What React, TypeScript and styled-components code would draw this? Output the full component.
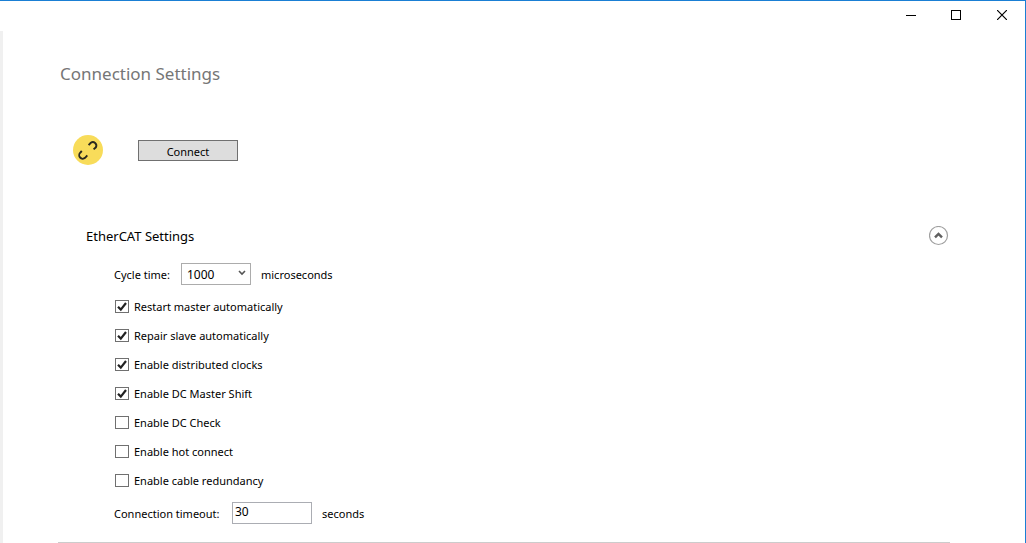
import React, { useState } from "react";
import styled, { createGlobalStyle } from "styled-components";

const GlobalStyle = createGlobalStyle`
  *, *::before, *::after { box-sizing: border-box; }
  html, body, #root { height: 100%; }
  body {
    margin: 0;
    background: #fff;
    color: #000;
    font: 11px/16px "Segoe UI", "Noto Sans", "Open Sans", sans-serif;
  }
  button, input, select { font: inherit; color: inherit; border-radius: 0; margin: 0; }
`;

const Window = styled.div`
  display: flex;
  flex-direction: column;
  min-height: 100%;
  border-top: 1px solid #1a7fd4;
  border-right: 1px solid #1a7fd4;
`;

const TitleBar = styled.header`
  display: flex;
  justify-content: flex-end;
  height: 30px;
`;

const CaptionButton = styled.button`
  display: flex;
  align-items: center;
  justify-content: center;
  width: 46px;
  height: 28px;
  padding: 0;
  border: 0;
  background: none;
`;

const Content = styled.main`
  flex: 1;
  border-left: 3px solid #f0f0f0;
  padding: 30px 75px 0 55px;
`;

const PageTitle = styled.h1`
  margin: 0;
  padding-left: 2px;
  font-size: 17px;
  line-height: 26px;
  font-weight: 400;
  color: #767676;
`;

const ConnectBar = styled.section`
  display: flex;
  align-items: center;
  gap: 35px;
  margin-top: 48px;
  padding-left: 15px;
`;

const ConnectButton = styled.button`
  width: 100px;
  height: 21px;
  padding: 3px 0 0;
  border: 1px solid #707070;
  background: #ddd;
  line-height: 16px;
`;

const Group = styled.section`
  margin-top: 60px;
  padding-bottom: 18px;
  border-bottom: 1px solid #ccc;
`;

const GroupHeader = styled.div`
  display: flex;
  align-items: center;
  justify-content: space-between;
  padding: 0 1px 0 28px;
`;

const GroupTitle = styled.h2`
  margin: 0;
  font-size: 13px;
  line-height: 22px;
  font-weight: 400;
`;

const Expander = styled.button`
  display: flex;
  padding: 0;
  border: 0;
  background: none;
`;

const GroupBody = styled.div`
  padding: 16px 0 0 56px;
`;

const FieldRow = styled.div`
  display: flex;
  align-items: center;
  gap: 10px;
  height: 22px;
`;

const FieldLabel = styled.label<{ $width: number }>`
  flex: none;
  width: ${(p) => p.$width}px;
  margin-right: -10px;
  padding-top: 1px;
  white-space: nowrap;
`;

const Unit = styled.span`
  padding-top: 1px;
`;

const SelectBox = styled.div`
  position: relative;
  display: flex;
  width: 70px;
  height: 22px;

  svg {
    position: absolute;
    right: 5px;
    top: 7px;
    pointer-events: none;
  }
`;

const Select = styled.select`
  appearance: none;
  width: 100%;
  padding: 1px 5px 0;
  border: 1px solid #acacac;
  background: #fff;
  font-size: 12px;
`;

const TextInput = styled.input`
  width: 80px;
  height: 22px;
  padding: 0 2px 3px;
  border: 1px solid #abadb3;
  background: #fff;
  font-size: 12px;
`;

const OptionList = styled.ul`
  display: grid;
  gap: 13px;
  margin: 14px 0 13px;
  padding: 0 0 0 1px;
  list-style: none;
`;

const Option = styled.label`
  display: inline-flex;
  align-items: center;
  gap: 5px;
  height: 16px;
  vertical-align: top;
`;

const OptionItem = styled.li`
  height: 16px;
`;

const CheckMark = styled.span`
  display: grid;
  width: 14px;
  height: 14px;

  > * { grid-area: 1 / 1; }
  > svg { visibility: hidden; pointer-events: none; }
  > input:checked + svg { visibility: visible; }
`;

const CheckInput = styled.input`
  appearance: none;
  width: 14px;
  height: 13px;
  border: 1px solid #707070;
  background: #fff;
`;

const initialOptions = [
  { label: "Restart master automatically", on: true },
  { label: "Repair slave automatically", on: true },
  { label: "Enable distributed clocks", on: true },
  { label: "Enable DC Master Shift", on: true },
  { label: "Enable DC Check", on: false },
  { label: "Enable hot connect", on: false },
  { label: "Enable cable redundancy", on: false },
];

const LinkIcon = () => (
  <svg width="30" height="30" viewBox="0 0 30 30" aria-hidden="true">
    <circle cx="15" cy="15" r="15" fill="#f8dc5a" />
    <g fill="none" stroke="#2b2a20" strokeWidth="1.9">
      <path d="M15.6 10.2 L17.8 7.8 A3.5 3.5 0 0 1 22.9 12.3 L20.6 14.4" />
      <path d="M8.8 16 L7.4 17.5 A3.5 3.5 0 0 0 12.1 22.8 L14.3 20.4" />
    </g>
  </svg>
);

export default function App() {
  const [options, setOptions] = useState(initialOptions);
  const [open, setOpen] = useState(true);
  const toggle = (i: number) =>
    setOptions(options.map((o, n) => (n === i ? { ...o, on: !o.on } : o)));

  return (
    <Window>
      <GlobalStyle />
      <TitleBar>
        <CaptionButton aria-label="Minimize">
          <svg width="12" height="10" shapeRendering="crispEdges">
            <path d="M2 5.5H12" stroke="#000" />
          </svg>
        </CaptionButton>
        <CaptionButton aria-label="Maximize">
          <svg width="10" height="10" shapeRendering="crispEdges">
            <rect x=".5" y=".5" width="9" height="9" fill="none" stroke="#000" />
          </svg>
        </CaptionButton>
        <CaptionButton aria-label="Close">
          <svg width="10" height="10">
            <path d="M0 0L10 10M10 0L0 10" stroke="#000" strokeWidth="1.2" />
          </svg>
        </CaptionButton>
      </TitleBar>
      <Content>
        <PageTitle>Connection Settings</PageTitle>
        <ConnectBar>
          <LinkIcon />
          <ConnectButton>Connect</ConnectButton>
        </ConnectBar>
        <Group>
          <GroupHeader>
            <GroupTitle>EtherCAT Settings</GroupTitle>
            <Expander aria-label="Toggle section" aria-expanded={open} onClick={() => setOpen(!open)}>
              <svg width="20" height="20" fill="none">
                <circle cx="9.5" cy="9.5" r="9" stroke="#a0a0a0" strokeWidth="1.2" />
                <path d="M6 11.4L9.5 7.9L13 11.4" stroke="#606060" strokeWidth="2.4" />
              </svg>
            </Expander>
          </GroupHeader>
          {open && (
            <GroupBody>
              <FieldRow>
                <FieldLabel $width={67} htmlFor="cycle">Cycle time:</FieldLabel>
                <SelectBox>
                  <Select id="cycle" defaultValue="1000">
                    <option>500</option>
                    <option>1000</option>
                    <option>2000</option>
                  </Select>
                  <svg width="8" height="6" fill="none">
                    <path d="M1 1L4 4L7 1" stroke="#555" strokeWidth="1.6" />
                  </svg>
                </SelectBox>
                <Unit>microseconds</Unit>
              </FieldRow>
              <OptionList>
                {options.map((o, i) => (
                  <OptionItem key={o.label}>
                    <Option>
                      <CheckMark>
                        <CheckInput type="checkbox" checked={o.on} onChange={() => toggle(i)} />
                        <svg width="14" height="13" fill="none">
                          <path d="M3 6.7L5.8 9.6L11 3" stroke="#212121" strokeWidth="2.2" />
                        </svg>
                      </CheckMark>
                      {o.label}
                    </Option>
                  </OptionItem>
                ))}
              </OptionList>
              <FieldRow>
                <FieldLabel $width={118} htmlFor="timeout">Connection timeout:</FieldLabel>
                <TextInput id="timeout" type="text" defaultValue="30" />
                <Unit>seconds</Unit>
              </FieldRow>
            </GroupBody>
          )}
        </Group>
      </Content>
    </Window>
  );
}
